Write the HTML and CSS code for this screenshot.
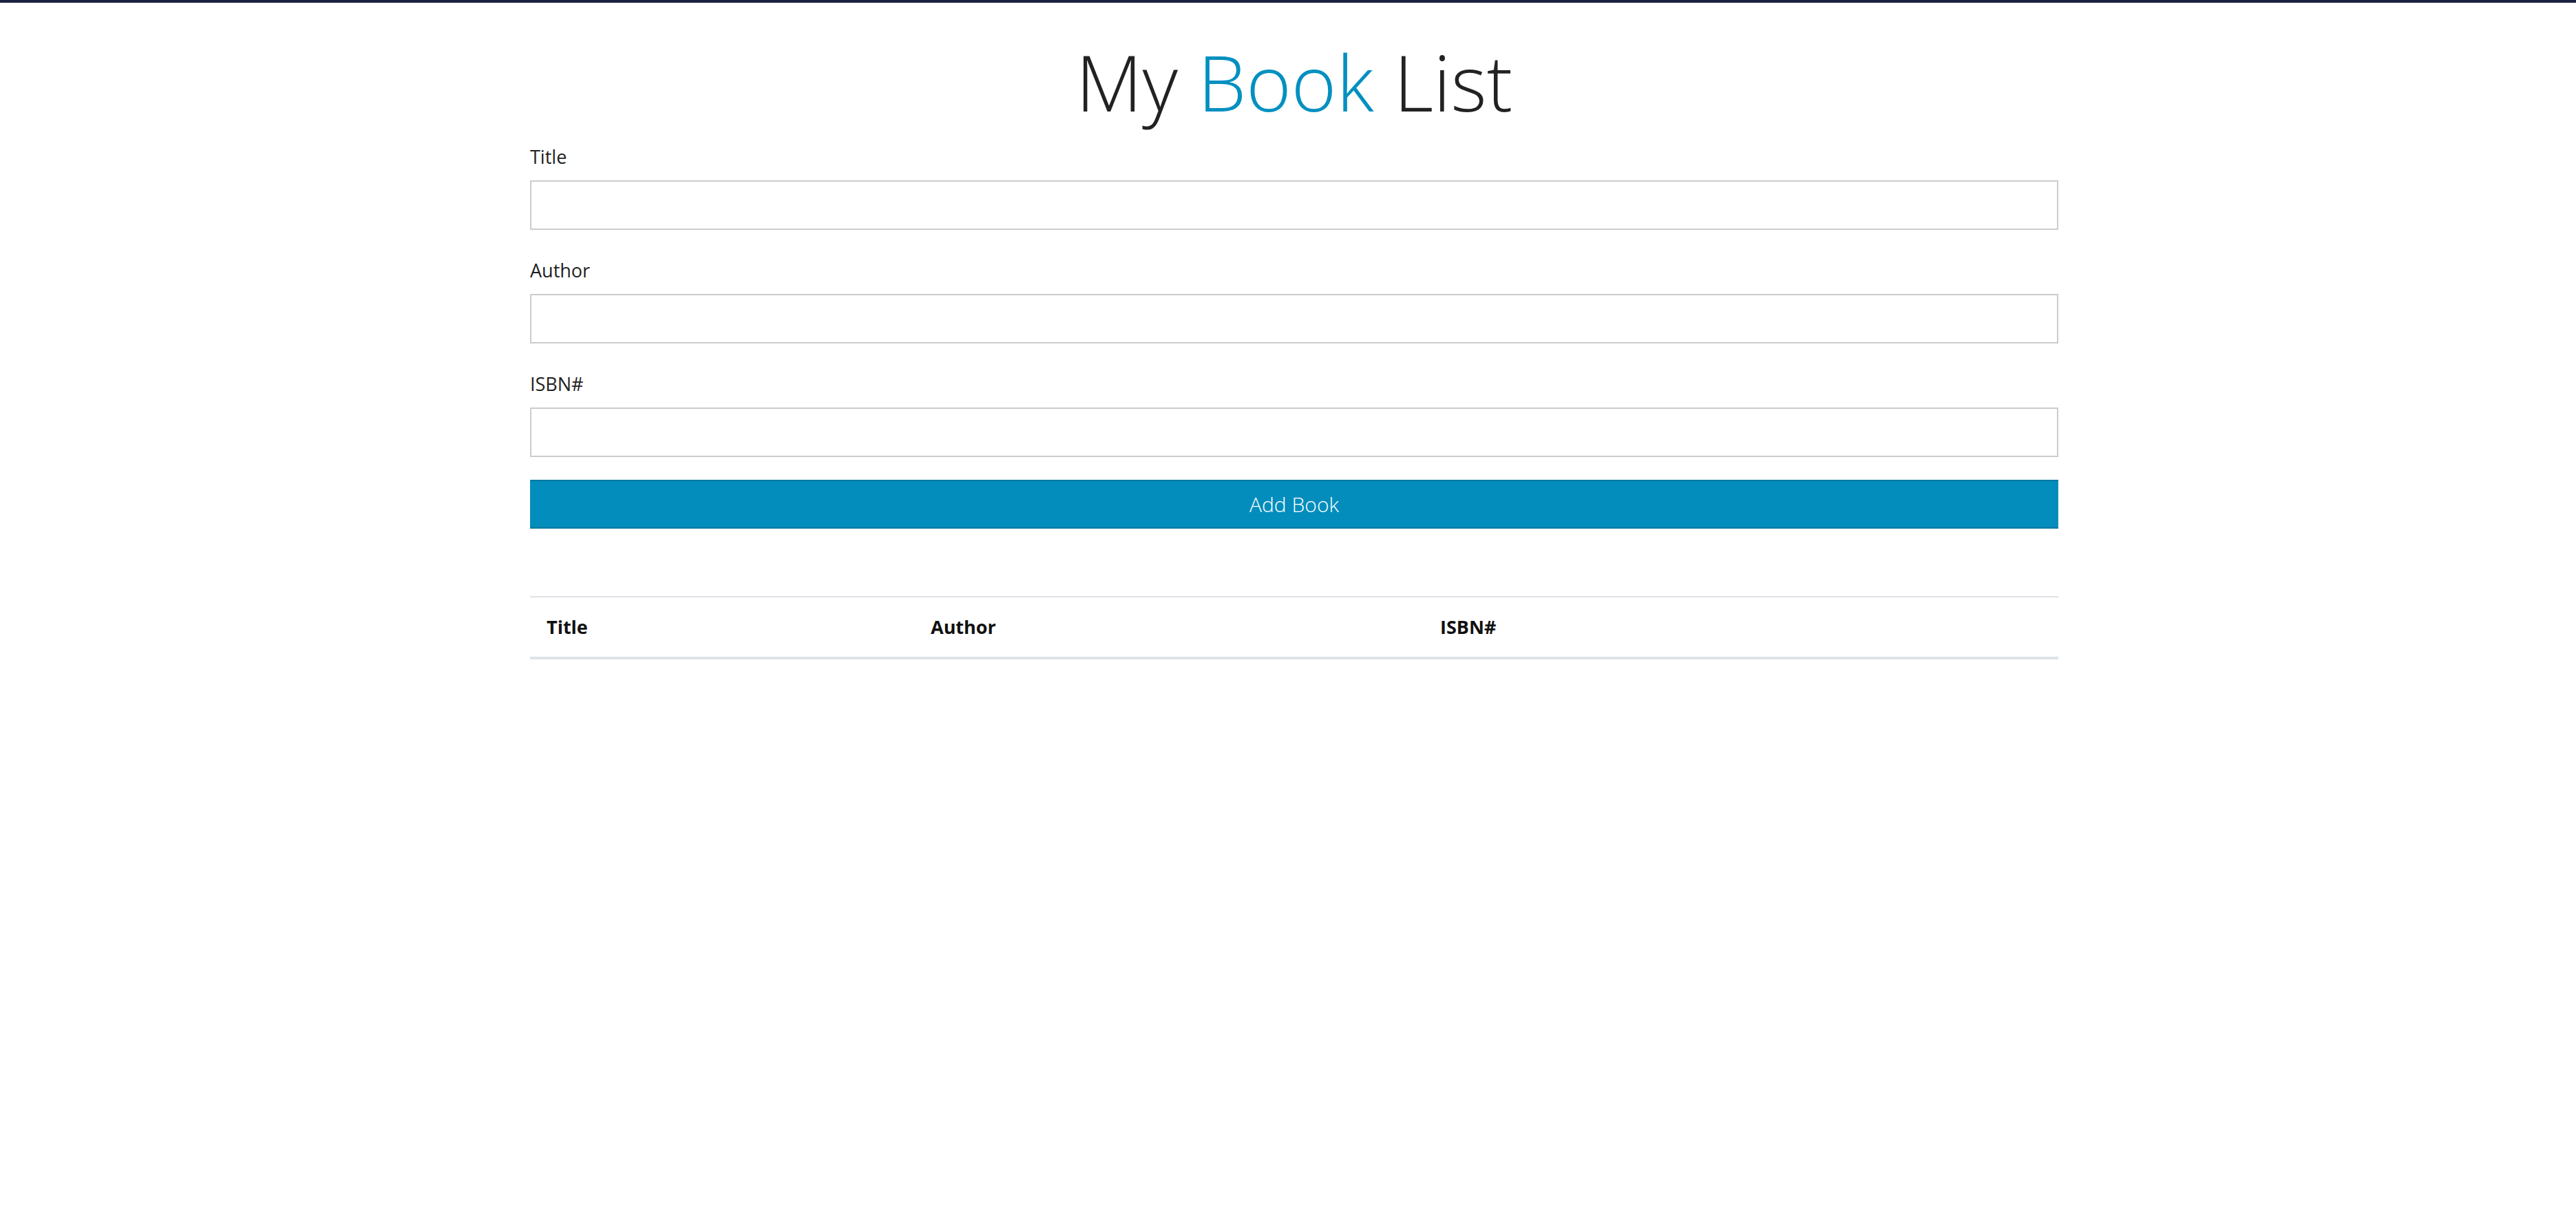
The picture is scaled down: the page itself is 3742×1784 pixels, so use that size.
FILE: index.html
```html
<!DOCTYPE html>
<html>
<head>
  <meta charset="utf-8"/>
  <link rel="stylesheet" href="styles.css">
  <title>My Book List</title>
</head>
<body>
  <div class="container">
    <h1 class="page-title">My <span class="accent">Book</span> List</h1>
    <form id="book-form">
      <div class="form-group">
        <label for="title">Title</label>
        <input type="text" id="title" class="form-control">
      </div>
      <div class="form-group">
        <label for="author">Author</label>
        <input type="text" id="author" class="form-control">
      </div>
      <div class="form-group">
        <label for="isbn">ISBN#</label>
        <input type="text" id="isbn" class="form-control">
      </div>
      <button type="submit" class="btn-add">Add Book</button>
    </form>
    <table class="book-table">
      <thead>
        <tr>
          <th class="col-title">Title</th>
          <th class="col-author">Author</th>
          <th>ISBN#</th>
        </tr>
      </thead>
      <tbody id="book-list"></tbody>
    </table>
  </div>
</body>
</html>
```

FILE: styles.css
```css
body {
  margin: 0;
  border-top: 4px solid #1b2140; /* thin dark strip along the top */
  font-family: "Open Sans", "Liberation Sans", sans-serif;
  color: #222;
  background: #fff;
}

.container {
  width: 2220px;
  margin-left: 770px;
}

.page-title {
  margin: 47px 0 0 0;
  font-size: 112px;
  font-weight: 300;
  line-height: 136px;
  text-align: center;
  color: #222;
}

.accent {
  color: #0290c0;
}

#book-form {
  margin-top: 21px;
}

.form-group {
  margin-bottom: 39px;
}

.form-group label {
  display: block;
  font-size: 27px;
  line-height: 40px;
  margin-bottom: 14px;
}

.form-control {
  display: block;
  box-sizing: border-box;
  width: 100%;
  height: 72px;
  margin: 0;
  border: 2px solid #cccccc;
  background: #fff;
  font-family: inherit;
  font-size: 27px;
  padding: 0 16px;
}

.btn-add {
  display: block;
  box-sizing: border-box;
  width: 100%;
  height: 71px;
  margin-top: -6px;
  border: 0;
  border-top: 2px solid #0278a3;
  border-bottom: 2px solid #0278a3;
  background: #038dbc;
  color: #fff;
  font-family: inherit;
  font-size: 30px;
  font-weight: 300;
}

.book-table {
  width: 100%;
  margin-top: 98px;
  border-collapse: collapse;
}

.book-table th {
  text-align: left;
  font-size: 27px;
  font-weight: 700;
  line-height: 40px;
  padding: 23px 24px;
  border-top: 2px solid #dee2e6;
  border-bottom: 4px solid #dee2e6;
  color: #111;
}

.col-title {
  width: 510px; /* 558 incl. padding */
}

.col-author {
  width: 692px; /* 740 incl. padding */
}
```
